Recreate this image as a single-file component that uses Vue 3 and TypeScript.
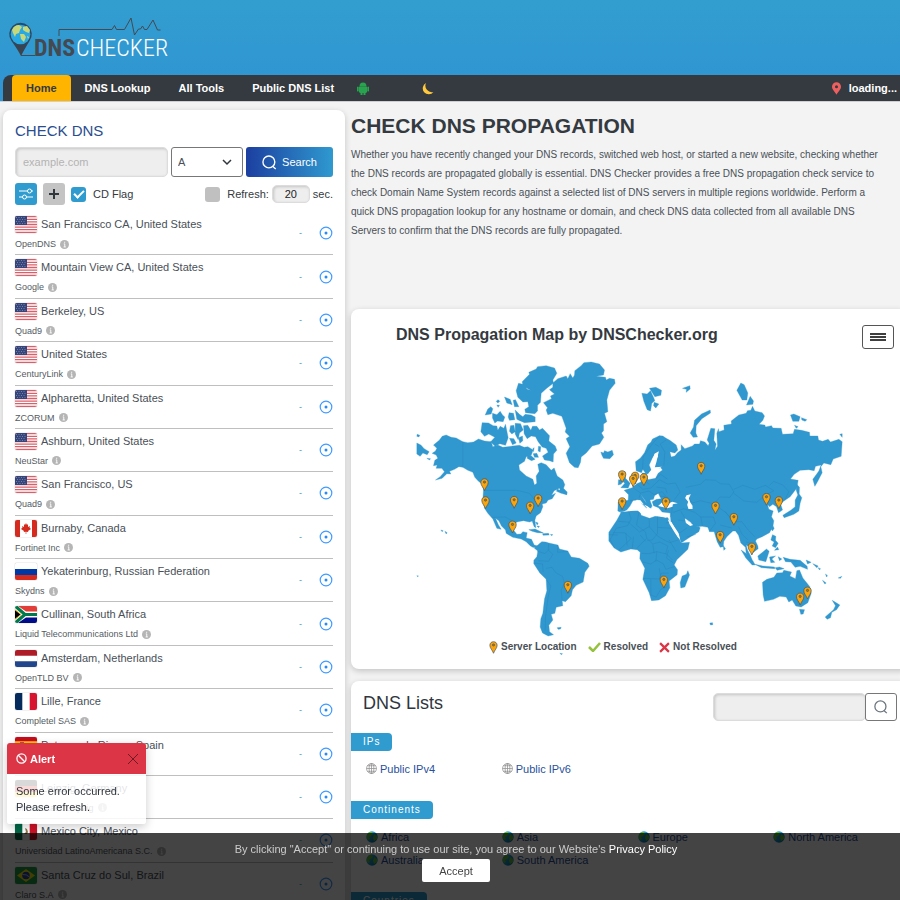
<script setup lang="ts">
import { ref } from 'vue'

interface Server { name: string; provider: string; flag: string }

const servers: Server[] = [
  { name: 'San Francisco CA, United States', provider: 'OpenDNS', flag: 'us' },
  { name: 'Mountain View CA, United States', provider: 'Google', flag: 'us' },
  { name: 'Berkeley, US', provider: 'Quad9', flag: 'us' },
  { name: 'United States', provider: 'CenturyLink', flag: 'us' },
  { name: 'Alpharetta, United States', provider: 'ZCORUM', flag: 'us' },
  { name: 'Ashburn, United States', provider: 'NeuStar', flag: 'us' },
  { name: 'San Francisco, US', provider: 'Quad9', flag: 'us' },
  { name: 'Burnaby, Canada', provider: 'Fortinet Inc', flag: 'ca' },
  { name: 'Yekaterinburg, Russian Federation', provider: 'Skydns', flag: 'ru' },
  { name: 'Cullinan, South Africa', provider: 'Liquid Telecommunications Ltd', flag: 'za' },
  { name: 'Amsterdam, Netherlands', provider: 'OpenTLD BV', flag: 'nl' },
  { name: 'Lille, France', provider: 'Completel SAS', flag: 'fr' },
  { name: 'Paterna de Rivera, Spain', provider: 'Tecnocratica', flag: 'es' },
  { name: 'Leipzig, Germany', provider: 'Universitaet Leipzig', flag: 'de' },
  { name: 'Mexico City, Mexico', provider: 'Universidad LatinoAmericana S.C.', flag: 'mx' },
  { name: 'Santa Cruz do Sul, Brazil', provider: 'Claro S.A', flag: 'br' },
]

const navLinks = ['DNS Lookup', 'All Tools', 'Public DNS List']
const ips = ['Public IPv4', 'Public IPv6']
const continents = ['Africa', 'Asia', 'Europe', 'North America', 'Australia', 'South America']

/* Marker centres in map units */
const pins: [number, number][] = [
  [225, 404], [228, 458], [314, 457], [362, 474], [386, 452], [309, 531], [475, 712],
  [638, 380], [677, 384], [671, 393], [703, 389], [638, 461], [769, 461], [875, 355],
  [918, 474], [973, 508], [1071, 448], [1108, 458], [932, 562], [1027, 597], [763, 696],
  [1194, 729], [1172, 747],
]

/* West: the Americas and Greenland */
const west: string[] = [
  'M110 255L98 259 90 270 72 285 82 295 78 303 68 310 80 315 85 325 76 331 72 347 83 345 80 355 97 355 105 365 92 380 78 390 98 385 112 371 124 372 120 364 135 358 148 350 160 352 175 361 190 367 196 382 207 394 218 402 222 420 220 450 225 475 235 490 250 507 262 535 275 538 267 525 258 505 268 512 276 528 288 540 290 550 310 562 335 567 350 575 362 587 370 592 382 594 389 589 374 585 366 568 350 564 353 548 340 545 334 552 322 553 312 540 312 521 325 515 342 512 360 516 368 513 374 530 379 533 376 511 380 498 393 488 400 470 398 462 410 459 416 450 428 446 438 430 426 436 434 422 450 415 455 424 472 434 472 425 462 415 466 404 460 390 443 378 434 354 425 361 410 344 395 338 385 343 389 364 380 378 382 400 375 405 370 388 350 378 330 360 328 345 345 334 350 320 365 316 371 300 355 290 344 292 330 286 310 288 280 292 265 285 250 290 245 275 225 273 207 267 192 276 175 278 160 275 140 264 125 262Z',
  'M22 279L34 285 44 296 59 305 53 314 40 309 32 319 22 312ZM23 253L31 256 28 261 22 259ZM52 325L63 326 60 330Z',
  'M338 95L360 73 358 67 380 57 384 50 410 47 435 54 442 70 430 90 432 99 410 116 395 130 393 157 384 166 384 183 376 191 348 188 346 178 358 170 355 155 340 156 325 142 320 122 327 100 340 103 353 118 364 121 341 109Z',
  'M285 141L302 148 308 164 292 159ZM311 151L318 149 328 170 315 170ZM266 149L271 154 265 159 260 154ZM262 165L270 166 266 172ZM244 170L250 176 245 192 227 195 235 177ZM249 190L262 194 272 184 279 195 286 201 281 215 264 213 256 219 249 204ZM299 188L312 190 316 209 300 211 296 201ZM317 180L330 193 340 200 347 193 365 195 377 201 377 215 345 218 331 212 322 208Z',
  'M218 218L237 219 251 227 262 228 265 241 272 229 283 235 288 223 296 263 288 286 271 281 257 289 243 276 256 262 238 252 225 259 214 245ZM303 227L313 226 317 245 307 252 300 244ZM317 220L333 221 341 240 330 249 326 269 317 252ZM300 265L313 266 320 279 309 284ZM327 263L339 258 340 272 331 280Z',
  'M342 227L355 226 364 241 369 229 382 229 390 240 399 235 420 257 418 273 437 288 442 301 432 312 431 336 420 332 405 330 399 318 416 307 410 295 398 291 386 275 378 260 365 258 353 266 344 251ZM370 296L374 293 372 305ZM387 289L394 290 392 306 386 303ZM354 313L365 317 377 328 366 332 353 325ZM371 311L382 310 387 322 375 322Z',
  'M495 75L496 62 515 47 523 38 545 36 570 42 585 60 582 75 560 79 588 82 590 90 600 85 615 88 617 100 600 121 592 150 595 185 585 190 592 215 582 222 582 242 576 249 583 262 570 282 548 288 530 309 515 321 513 337 506 353 495 352 480 338 470 310 481 290 470 266 480 259 467 246 470 235 457 199 430 190 415 194 410 180 414 173 402 158 426 146 423 138 435 132 420 119 430 112 430 99 445 86 470 78 475 86 482 71 490 84Z',
  'M574 306L582 309 585 302 595 306 608 301 612 314 601 326 582 325 577 315Z',
  'M375 595L391 580 397 575 409 576 418 579 445 585 450 597 475 603 485 621 510 625 535 640 539 649 526 667 521 696 500 706 489 719 485 737 468 755 458 752 460 767 440 772 436 790 425 793 430 810 418 826 420 845 432 854 416 858 399 849 392 831 394 806 400 790 405 747 412 722 410 688 391 669 373 641 373 631 382 620 385 603Z',
  'M358 539L377 537 402 549 384 548 368 544ZM399 551L417 550 419 555 401 556ZM423 553L430 554 426 557ZM378 516L386 519 383 525ZM382 528L390 529 387 533ZM94 540L101 542 98 545ZM106 544L113 548 110 552ZM22 677L27 678 24 680ZM443 833L455 832 453 837 446 838ZM451 910L459 911 456 914Z',
  'M443 417L451 421 455 411 460 421 473 427 471 434 455 430 441 424Z',
]

/* East: Europe, Africa, Asia and Oceania, drawn from an origin 570 units to the right */
const east: string[] = [
  'M108 335L123 324 135 308 145 284 154 277 159 267 180 257 190 258 200 265 211 271 230 285 235 300 226 309 211 305 215 321 226 318 234 308 245 300 245 284 256 296 279 288 285 282 300 282 303 272 316 276 326 287 329 280 323 270 334 235 346 236 343 271 350 282 346 301 354 289 352 250 357 236 358 245 374 240 373 226 396 222 395 213 418 195 440 190 444 182 454 181 459 169 466 183 488 188 495 198 490 211 479 223 496 225 498 231 516 227 520 234 545 235 549 253 581 251 585 238 606 241 630 247 631 258 655 258 657 270 669 274 686 268 693 276 718 268 728 275 725 319 701 327 694 344 673 339 664 350 668 368 654 395 646 409 640 388 651 373 658 363 665 345 648 349 644 362 628 359 602 361 584 373 573 387 596 391 592 414 572 440 552 454 543 461 549 480 537 488 531 470 520 463 510 470 504 463 508 478 521 483 516 500 523 512 520 530 510 548 488 560 472 567 468 573 475 588 476 596 460 608 451 592 440 585 444 600 453 617 458 630 450 628 440 610 438 592 424 579 417 556 408 543 400 543 382 560 373 574 371 590 362 592 353 575 344 545 330 545 325 532 308 529 288 530 270 514 258 506 261 520 270 525 280 518 302 533 298 545 272 561 246 578 235 553 214 512 212 489 188 486 177 473 162 467 158 455 171 448 185 446 176 430 165 437 162 448 151 450 158 469 150 475 136 450 122 431 139 457 156 474 143 476 116 449 101 451 91 469 81 481 66 488 55 483 56 456 86 451 87 434 74 421 98 413 112 401 124 396 128 385 128 369 141 370 145 389 168 385 176 370 189 360 184 353 166 357 160 347 176 319 170 309 159 323 149 345 155 360 145 372 137 368 130 358 126 368 110 362Z',
  'M59 365L77 365 78 385 92 400 86 414 64 413 76 400 66 391 70 380ZM57 389L68 390 66 402 56 405Z',
  'M65 487L90 484 120 478 125 496 150 505 167 499 205 503 214 521 235 560 246 579 270 577 265 598 232 629 224 645 234 659 233 674 209 693 211 713 198 737 178 750 156 752 149 728 130 688 136 655 121 626 122 607 113 599 94 597 64 606 44 594 28 573 28 547 52 511Z',
  'M265 662L270 675 256 711 244 714 242 698 248 678 261 673ZM371 586L378 596 373 601ZM331 819L339 818 340 824 333 825Z',
  'M127 130L143 132 153 122 162 142 166 152 157 160 153 183 143 179 133 154ZM150 115L169 112 186 121 184 136 166 140ZM164 157L178 162 169 174 162 167ZM249 115L271 107 272 117 260 127 261 118Z',
  'M332 180L333 189 307 206 290 227 289 249 294 261 281 262 272 249 282 231 285 211 306 192ZM424 99L434 104 445 129 442 150 428 150 412 121ZM452 139L462 153 460 163 441 165ZM573 195L583 192 602 200 598 214 580 214ZM606 203L622 209 617 214 607 210ZM585 226L596 230 590 235ZM721 253L728 251 728 262Z',
  'M591 402L600 412 599 432 607 443 602 459 598 483 583 493 554 503 550 496 575 480 587 470 587 450 595 435 590 420ZM520 527L524 535 519 543 515 537ZM519 554L529 559 528 571 536 580 528 593 518 588 524 576 514 570ZM534 591L538 599 525 601ZM425 600L441 611 460 632 467 645 458 645 439 624ZM466 643L490 648 525 651 526 656 486 653ZM475 618L490 606 501 597 509 604 499 635 478 630ZM510 621L528 618 517 627 526 637 514 638ZM536 620L547 627 540 632ZM551 622L572 628 602 631 623 649 624 658 602 649 587 652 574 636 558 635ZM527 653L540 651 554 656 533 661ZM620 630L635 637 624 642ZM640 641L656 648 652 653ZM656 653L663 656 660 660Z',
  'M489 697L502 688 523 682 532 669 549 668 553 661 576 666 571 678 588 686 592 662 600 660 610 684 631 710 635 730 625 758 605 771 589 768 578 750 568 756 560 741 541 739 522 748 495 754 491 735ZM600 778L615 779 611 792 604 793ZM698 751L708 757 721 765 711 779 697 787 693 803 683 808 677 801 702 779 708 767ZM669 691L680 699 676 702ZM678 672L684 677 681 681ZM716 684L727 679 723 685Z',
]

const seas: string[] = [
  'M176 468L188 457 200 464 218 455 235 460 220 463 219 470 203 475 189 471ZM261 436L274 433 268 445 272 457 279 467 279 477 267 477 263 464 266 455 257 444Z',
  'M165 311L178 304 171 335 166 352 187 350 167 363 159 379 146 386 148 370 158 356 155 338Z',
  'M110 452L122 450 143 475 131 478 134 493 157 495 180 498 200 503 203 496 181 496 171 478 161 481 144 469ZM59 486L119 475 131 486 128 493 115 482 89 482Z',
  'M205 508L210 522 225 547 235 562 242 568 237 549 215 516ZM256 505L259 518 272 528 281 525 264 512Z',
]

const bordersWest = 'M160 275V352M222 421H322L360 430 374 448 398 443M248 502L287 501 311 514M418 580L416 600 430 613 417 634 386 632M445 585L444 607 475 604M383 603L406 611 419 598M410 655L427 652 440 669 459 679 465 700 455 720 458 752M410 688L424 708 416 741 408 800 407 842M373 639L399 642 401 666'
const bordersEast = 'M180 257L155 286 131 321 129 359M200 270L182 282 196 306 193 347M166 282L180 290M101 414L123 429 148 423 164 434 188 425 198 438M112 402L130 418 154 414 180 389 204 402 228 399 242 426 225 448M135 388L149 404M168 386L184 373 203 387M171 411L198 415 203 430M180 438L204 441M259 412L303 403 317 389 348 391 362 401 390 403 403 426 391 442 361 441 344 462 303 452 278 459 263 437M403 418L430 406 466 418 497 406 523 422 495 437 472 457 433 453 403 430M510 406L522 394 550 405 568 425 555 451M343 462L377 486 403 515 427 515 446 540 466 560M221 487L253 476 286 487 304 501 342 501 348 520 330 544M219 463L217 487 213 501M257 505L244 484M304 501L309 528M362 525L397 534M417 530L427 552 445 570M440 576L461 582M56 514L86 516 120 546 149 530 174 558 196 571 211 578 235 570M88 485L95 507 84 527 50 535 32 569 45 593M119 483L111 525 138 546 142 565 121 585 110 598M149 505L150 532M174 500L174 551 158 570 143 571M174 532L220 535M142 565L160 582 181 576 205 588 199 610 219 630M126 610L148 611 172 605 201 612M130 636L154 642 171 630 192 642 199 658 224 650M132 685L179 687 185 670 207 669M154 687V735L170 741 184 718 203 710M40 548L75 548 95 565 77 583 58 600M160 583L164 610M209 570L231 606'
const africanLines = 'M28 554L55 555M79 549L83 587M102 560L98 597M122 555L138 574M172 605L169 635M179 655L185 688 200 700M207 600L201 624 220 638M219 513L200 519M235 510L269 514M263 533L242 548 224 545M289 553L262 561M572 631L591 634M390 500L374 482M91 452L110 450M123 430L119 443'

const recordType = ref('A')
const cdFlag = ref(true)
const autoRefresh = ref(false)
const alertOpen = ref(true)
const consentOpen = ref(true)
</script>

<template>
  <div class="site">
    <svg class="defs" aria-hidden="true">
      <defs>
        <linearGradient id="globe" x1="0" y1="0" x2="1" y2="1"><stop offset="0" stop-color="#2db4ef" /><stop offset="1" stop-color="#0873a8" /></linearGradient>
        <linearGradient id="pinBody" x1="0" y1="0" x2="0" y2="1"><stop offset="0" stop-color="#244b70" /><stop offset="1" stop-color="#3d4249" /></linearGradient>
      </defs>
      <symbol id="pin" viewBox="0 0 24 36"><path d="M12 2C6 2 2 6 2 12c0 8 7 13 10 22 3-9 10-14 10-22 0-6-4-10-10-10Z" fill="#fca50b" stroke="#4d5860" stroke-width="2" /><circle cx="12" cy="11" r="3" fill="#9c7b2b" stroke="#4d5860" stroke-width="2" /></symbol>
      <symbol id="search" viewBox="0 0 24 24"><circle cx="11" cy="11" r="9.500" fill="none" stroke="currentColor" stroke-width="2.200" /><path d="M17 18l5 4.500" fill="none" stroke="currentColor" stroke-width="2.200" /></symbol>
      <symbol id="flag-us" viewBox="0 0 22 17"><path fill="#fff" d="M0 0h22v17H0z" /><path stroke="#d9606a" stroke-width="1.3" d="M0 .7h22M0 3.3h22M0 5.9h22M0 8.5h22M0 11.1h22M0 13.7h22M0 16.3h22" /><path fill="#35457c" d="M0 0h12v9H0z" /><path stroke="#8490b4" stroke-width=".8" stroke-dasharray="1 1.5" d="M1 1.5h10M2 3.5h9M1 5.5h10M2 7.5h9" /></symbol>
      <symbol id="flag-ca" viewBox="0 0 22 17"><path fill="#fff" d="M0 0h22v17H0z" /><path fill="#d52b1e" d="M0 0h5v17H0zM17 0h5v17h-5zM11 3l1 2 1-1v3l2-1-.5 1.500L16 9l-3 2 .3 1-2-.3V14h-.6v-2.300l-2 .3.3-1-3-2 1.500-1.500L7 6l2 1V4l1 1z" /></symbol>
      <symbol id="flag-ru" viewBox="0 0 22 17"><path fill="#fff" d="M0 0h22v6H0z" /><path fill="#0039a6" d="M0 6h22v6H0z" /><path fill="#d52b1e" d="M0 12h22v5H0z" /></symbol>
      <symbol id="flag-za" viewBox="0 0 22 17"><path fill="#fff" d="M0 0h22v17H0z" /><path fill="#e23d36" d="M3 0h19v5.500H11z" /><path fill="#000c8a" d="M3 17h19v-5.500H11z" /><path fill="none" stroke="#007a4d" stroke-width="3.200" d="M-1-1l11 9.500L-1 18M9 8.500h13" /><path fill="#000" stroke="#ffb612" stroke-width="1" d="M-1 3l7 5.500L-1 14z" /></symbol>
      <symbol id="flag-nl" viewBox="0 0 22 17"><path fill="#fff" d="M0 0h22v17H0z" /><path fill="#ae1c28" d="M0 0h22v5.700H0z" /><path fill="#21468b" d="M0 11.300h22V17H0z" /></symbol>
      <symbol id="flag-fr" viewBox="0 0 22 17"><path fill="#fff" d="M0 0h22v17H0z" /><path fill="#052a5c" d="M0 0h7.300v17H0z" /><path fill="#d81530" d="M14.700 0H22v17h-7.300z" /></symbol>
      <symbol id="flag-es" viewBox="0 0 22 17"><path fill="#c60b1e" d="M0 0h22v17H0z" /><path fill="#ffc400" d="M0 4.200h22v8.600H0z" /><path fill="#b05a20" d="M5 5h4v5H5z" /></symbol>
      <symbol id="flag-de" viewBox="0 0 22 17"><path d="M0 0h22v6H0z" /><path fill="#d00" d="M0 6h22v6H0z" /><path fill="#ffce00" d="M0 12h22v5H0z" /></symbol>
      <symbol id="flag-mx" viewBox="0 0 22 17"><path fill="#fff" d="M0 0h22v17H0z" /><path fill="#006847" d="M0 0h7.300v17H0z" /><path fill="#ce1126" d="M14.700 0H22v17h-7.300z" /><path fill="#8c7748" d="M10 5l2 1 1 3-1 2H9l2-2z" /></symbol>
      <symbol id="flag-br" viewBox="0 0 22 17"><path fill="#229e45" d="M0 0h22v17H0z" /><path fill="#f8e509" d="M11 2l9 6.500L11 15 2 8.500z" /><circle cx="11" cy="8.500" r="3.800" fill="#2b49a3" /><path fill="none" stroke="#fff" stroke-width=".6" d="M7.500 7.500q4-.5 7 2.500" /></symbol>
    </svg>

    <header class="site-header">
      <a class="logo" href="#" aria-label="DNS Checker">
        <svg viewBox="0 0 160 42" width="160" height="42">
          <path d="M12 38Q9 32 2.500 23A11.300 11.300 0 1 1 20.500 23Q15 32 12 38Z" fill="url(#pinBody)" />
          <path d="M12 37.500h14M50 18v-6.500h53l2.500-4 2 4h8L122 0l3.500 17 4-6h2l2-3 2 3.500h2.500L144 2l4.500 10h3" fill="none" stroke="#444a52" stroke-width="1" />
          <circle cx="11.500" cy="16.500" r="9.800" fill="#28a9e4" />
          <path d="M3 12q2-5 7-5l3 2-2 3-1 3-3 1-1 3-2-4ZM14 9l4-1 3 4-1 3-3-1-3-2ZM11 16h4l2 3-2 5-3-3ZM18 18l2 1-1 2Z" fill="#c8d879" />
          <text x="25" y="38" class="logo-dns">DNS</text>
          <text x="67" y="38" class="logo-checker">CHECKER</text>
        </svg>
      </a>
      <nav class="nav">
        <a class="nav-link active" href="#">Home</a>
        <a v-for="link in navLinks" :key="link" class="nav-link" href="#">{{ link }}</a>
        <a class="nav-icon android" href="#" aria-label="Android app">
          <svg viewBox="0 0 12 13" width="12" height="13" fill="#27a44d"><path d="M2.500 4.500a3.500 4 0 0 1 7 0zM2 4.800h8V10l-1 1H3l-1-1zM0 5q1-1 1.700 0v4Q.8 10 0 9zM10.300 5q1-1 1.700 0v4q-.8 1-1.700 0zM3.500 10h2v3h-2zM6.500 10h2v3h-2z" /></svg>
        </a>
        <button class="nav-icon" type="button" aria-label="Dark mode">
          <svg viewBox="0 0 12 13" width="12" height="13"><path d="M4 1a6 6 0 1 0 7.500 9A6.500 6.500 0 0 1 4 1Z" fill="#ffc83d" /></svg>
        </button>
        <span class="location">
          <svg viewBox="0 0 10 14" width="9" height="13"><path fill-rule="evenodd" d="M5 0a5 5 0 0 0-5 5c0 3 3 5 5 9 2-4 5-6 5-9a5 5 0 0 0-5-5Zm0 3.300a1.700 1.700 0 1 1 0 3.400 1.700 1.700 0 0 1 0-3.400Z" fill="#ee6060" /></svg>
          loading...
        </span>
      </nav>
    </header>

    <div class="columns">
      <section class="card checker">
        <h2>CHECK DNS</h2>
        <form class="query" @submit.prevent>
          <input class="field domain" type="text" placeholder="example.com" aria-label="Domain name" />
          <span class="select-wrap">
            <select v-model="recordType" aria-label="Record type"><option>A</option><option>AAAA</option><option>MX</option></select>
            <svg viewBox="0 0 10 10" width="10" height="10"><path d="M1 3l4 4 4-4" fill="none" stroke="#30363d" stroke-width="1.500" /></svg>
          </span>
          <button class="go" type="submit"><svg width="15" height="15"><use href="#search" /></svg>Search</button>
        </form>
        <div class="options">
          <button class="tool blue" type="button" aria-label="Filter">
            <svg viewBox="0 0 14 12" width="14" height="12" fill="none" stroke="#fff"><path d="M0 3h8.500M12.500 3H14M0 9h3.500M7.500 9H14" /><circle cx="10.500" cy="3" r="2" /><circle cx="5.500" cy="9" r="2" /></svg>
          </button>
          <button class="tool" type="button" aria-label="Add server">
            <svg viewBox="0 0 10 10" width="10" height="10"><path d="M5 0v10M0 5h10" stroke="#30363d" stroke-width="2" /></svg>
          </button>
          <label class="check"><input v-model="cdFlag" type="checkbox" /><span>CD Flag</span></label>
          <label class="check refresh"><input v-model="autoRefresh" type="checkbox" /><span>Refresh:</span></label>
          <label class="seconds"><input class="field" type="text" value="20" aria-label="Refresh seconds" />sec.</label>
        </div>
        <ul class="servers">
          <li v-for="(server, index) in servers" :key="index">
            <div class="server">
              <div class="place"><svg class="flag" width="22" height="17"><use :href="'#flag-' + server.flag" /></svg>{{ server.name }}</div>
              <div class="provider">{{ server.provider }}
                <svg viewBox="0 0 10 10" width="9" height="9"><circle cx="5" cy="5" r="5" fill="#b5b5b5" /><path d="M4.200 4.300H5.300V7.700M4 7.700h2.500M5.200 1.900v1.300" stroke="#fff" fill="none" /></svg>
              </div>
            </div>
            <span class="result">-</span>
            <svg class="target" viewBox="0 0 14 14" width="14" height="14"><circle cx="7" cy="7" r="5.800" fill="none" stroke="#409bff" stroke-width="1.200" /><circle cx="7" cy="7" r="1.500" fill="#258cf5" /></svg>
          </li>
        </ul>
      </section>

      <main class="content">
        <section class="intro">
          <h1>CHECK DNS PROPAGATION</h1>
          <p>Whether you have recently changed your DNS records, switched web host, or started a new website, checking whether the DNS records are propagated globally is essential. DNS Checker provides a free DNS propagation check service to check Domain Name System records against a selected list of DNS servers in multiple regions worldwide. Perform a quick DNS propagation lookup for any hostname or domain, and check DNS data collected from all available DNS Servers to confirm that the DNS records are fully propagated.</p>
        </section>

        <section class="card map-card">
          <div class="map-head">
            <h2>DNS Propagation Map by DNSChecker.org</h2>
            <button type="button" aria-label="Map menu"><svg viewBox="0 0 16 8" width="16" height="8"><path d="M0 1h16M0 4h16M0 7h16" stroke="#000" stroke-width="1.600" /></svg></button>
          </div>
          <svg class="map" viewBox="20 30 1280 900" width="427" height="300">
            <g class="land"><path v-for="d in west" :key="d" :d="d" /></g>
            <path class="border" :d="bordersWest" />
            <g transform="translate(570 0)">
              <g class="land"><path v-for="d in east" :key="d" :d="d" /></g>
              <path class="border" :d="bordersEast" /><path class="border" :d="africanLines" />
              <g fill="#fff"><path v-for="d in seas" :key="d" :d="d" /></g>
            </g>
            <use v-for="(p, i) in pins" :key="i" href="#pin" :x="p[0] - 14" :y="p[1] - 20" width="28" height="40" />
          </svg>
          <ul class="legend">
            <li><svg width="9" height="13"><use href="#pin" /></svg>Server Location</li>
            <li><svg viewBox="0 0 13 10" width="13" height="10"><path d="M1 5l4 4 7-8" fill="none" stroke="#95c13d" stroke-width="2.500" /></svg>Resolved</li>
            <li><svg viewBox="0 0 10 10" width="11" height="11"><path d="M1 1l8 8M9 1L1 9" stroke="#dc3545" stroke-width="2" /></svg>Not Resolved</li>
          </ul>
        </section>

        <section class="card lists">
          <div class="lists-head">
            <h2>DNS Lists</h2>
            <form class="list-search" @submit.prevent>
              <input class="field" type="text" aria-label="Search DNS lists" />
              <button type="submit" aria-label="Search"><svg width="14" height="14"><use href="#search" /></svg></button>
            </form>
          </div>
          <h3 class="tag">IPs</h3>
          <ul class="links">
            <li v-for="ip in ips" :key="ip">
              <a href="#"><svg viewBox="0 0 12 12" width="11" height="11" fill="none" stroke="#8d8d8d" stroke-width=".8"><circle cx="6" cy="6" r="5.400" /><ellipse cx="6" cy="6" rx="2.600" ry="5.400" /><path d="M6 .5v11M.5 6h11M1.500 3h9M1.500 9h9" /></svg>{{ ip }}</a>
            </li>
          </ul>
          <h3 class="tag">Continents</h3>
          <ul class="links">
            <li v-for="place in continents" :key="place">
              <a href="#"><svg viewBox="0 0 12 12" width="12" height="12"><circle cx="6" cy="6" r="5.700" fill="url(#globe)" /><path d="M1 4q2-4 5-3l1 2-2 2-2 1 1 2-2 1Q0 7 1 4ZM8 3l3 2v3l-3 2-1-3Z" fill="#63bb37" /></svg>{{ place }}</a>
            </li>
          </ul>
          <h3 class="tag">Countries</h3>
        </section>
      </main>
    </div>

    <aside v-if="alertOpen" class="alert" role="alert">
      <div class="alert-head">
        <svg viewBox="0 0 12 12" width="11" height="11" fill="none" stroke="#fff" stroke-width="1.400"><circle cx="6" cy="6" r="5" /><path d="M2.500 2.500l7 7" /></svg>
        <strong>Alert</strong>
        <button type="button" aria-label="Close" @click="alertOpen = false"><svg viewBox="0 0 12 12" width="12" height="12"><path d="M1 1l10 10M11 1L1 11" stroke="#701b23" /></svg></button>
      </div>
      <div class="alert-body">Some error occurred.<br />Please refresh.</div>
    </aside>

    <div v-if="consentOpen" class="consent">
      <p>By clicking "Accept" or continuing to use our site, you agree to our Website's <a href="#">Privacy Policy</a></p>
      <button type="button" @click="consentOpen = false">Accept</button>
    </div>
  </div>
</template>

<style>
body { background: #f3f3f3; }
</style>

<style scoped>
.site, .site * { box-sizing: border-box; }
.site { height: 100vh; overflow: hidden; color: #495057; background: #f3f3f3; font-family: "Liberation Sans", Arial, sans-serif; font-size: 11px; line-height: 16px; }
.defs { position: absolute; width: 0; height: 0; }
h1, h2, h3, p, ul { margin: 0; padding: 0; font-weight: normal; }
ul { list-style: none; }
svg { display: block; flex: none; }
a { text-decoration: none; color: inherit; }
button, input, select { font: inherit; color: inherit; margin: 0; padding: 0; }
button { border: 0; background: none; display: flex; align-items: center; justify-content: center; cursor: pointer; }

.site-header { background: linear-gradient(#329ecf, #3093d3); border-bottom: 1px solid #cfcfcf; padding-left: 3px; }
.logo { display: block; height: 75px; padding: 18px 0 0 6px; }
.logo svg { overflow: visible; }
.logo text { font-family: "Liberation Sans Narrow", "Roboto Condensed", "Liberation Sans", sans-serif; font-size: 24px; }
.logo .logo-dns { font-weight: bold; fill: #444a52; }
.logo .logo-checker { font-weight: 300; fill: #fff; }
.nav { display: flex; align-items: stretch; height: 26px; padding: 0 3px 0 9px; background: #343a40; border-radius: 8px 0 0 0; color: #fff; font-weight: bold; }
.nav-link { padding: 5px 14px; }
.nav-link.active { background: #ffb400; color: #343a40; border-radius: 4px 4px 0 0; }
.nav-icon { display: flex; align-items: center; margin-left: 53px; }
.nav-icon.android { margin-left: 9px; }
.location { display: flex; align-items: center; gap: 8px; margin-left: auto; }

.columns { display: flex; align-items: flex-start; gap: 6px; margin: 8px -9px 0 3px; }
.card { background: #fff; border-radius: 8px; box-shadow: 0 2px 6px rgba(0, 0, 0, .2); }
.checker { flex: none; width: 342px; padding: 9px 12px; }
.checker h2 { font-size: 15px; line-height: 24px; color: #2a4d8f; }
.field { border: 1px solid #dcdcdc; border-radius: 5px; background: #eee; box-shadow: inset 1px 1px 3px rgba(0, 0, 0, .18); outline: 0; min-width: 0; }
.query { display: flex; gap: 3px; margin-top: 4px; height: 30px; }
.domain { flex: 1; padding: 0 7px; }
.domain::placeholder { color: #b3b3b3; opacity: 1; }
.select-wrap { position: relative; width: 72px; }
.select-wrap select { width: 100%; height: 100%; appearance: none; border: 1px solid #777; border-radius: 3px; background: #fff; padding-left: 6px; }
.select-wrap svg { position: absolute; right: 11px; top: 10px; }
.go { width: 87px; gap: 5px; border-radius: 3px; color: #fff; background: linear-gradient(90deg, #1c3fa0, #2f99cf); }
.options { display: flex; align-items: center; height: 22px; margin-top: 6px; }
.tool { width: 22px; height: 22px; border-radius: 3px; background: #c4c4c4; margin-right: 6px; }
.tool.blue { background: #2f9bcf; }
.check { display: flex; align-items: center; gap: 7px; color: #343a40; }
.check input { appearance: none; width: 15px; height: 15px; border-radius: 3px; background: #c0c0c0; display: grid; place-items: center; }
.check input:checked { background: #2f9bcf; }
.check input:checked::before { content: ""; width: 8px; height: 4px; border: solid #fff; border-width: 0 0 2px 2px; transform: translateY(-1px) rotate(-45deg); }
.refresh { margin-left: auto; margin-right: 3px; }
.seconds { display: flex; align-items: center; gap: 3px; color: #343a40; }
.seconds input { width: 38px; height: 18px; text-align: center; color: #222; }
.servers { display: grid; grid-auto-rows: 1fr; min-height: 694px; margin-top: 7px; }
.servers li { display: flex; align-items: center; border-bottom: 1px solid #bfbfbf; }
.server { flex: 1; align-self: start; padding-top: 4px; }
.place { display: flex; align-items: flex-start; gap: 4px; height: 20px; }
.flag { border-radius: 2px; box-shadow: 0 0 1px #777; }
.provider { display: flex; align-items: center; gap: 4px; font-size: 9px; line-height: 14px; margin-top: 1px; color: #555b62; }
.result { color: #409bc8; font-size: 9px; margin-right: 17px; }

.content { flex: 1; min-width: 0; display: grid; gap: 12px; }
.intro { height: 187px; }
.intro h1 { font-size: 21px; line-height: 32px; font-weight: bold; color: #343a40; white-space: nowrap; }
.intro p { max-width: 540px; font-size: 10px; line-height: 19px; margin-top: 3px; }
.map-card { height: 360px; padding: 16px 15px 0 45px; }
.map-head { display: flex; justify-content: space-between; }
.map-head h2 { font-size: 16px; line-height: 20px; font-weight: bold; color: #343a40; }
.map-head button { width: 32px; height: 24px; border: 1px solid #555; border-radius: 3px; }
.map { display: block; margin: 11px 0 0 20px; }
.land { fill: #3098cf; stroke: #3098cf; stroke-width: 1; stroke-linejoin: round; }
.border { fill: none; stroke: #2585ba; stroke-width: 2; stroke-linejoin: round; opacity: .65; }
.legend { position: relative; display: flex; gap: 11px; margin: -21px 0 0 93px; font-size: 10px; font-weight: bold; }
.legend li { display: flex; align-items: center; gap: 3px; white-space: nowrap; }

.lists { min-height: 240px; }
.lists-head { display: flex; align-items: flex-start; justify-content: space-between; padding: 12px 12px 0; }
.lists h2 { font-size: 18px; line-height: 20px; color: #30363d; }
.list-search { display: flex; height: 28px; }
.list-search input { width: 153px; }
.list-search button { width: 32px; margin-left: -1px; background: #fff; border: 1px solid #777; border-radius: 3px; color: #6c757d; }
.tag { display: table; margin-top: 12px; padding: 0 12px; font-size: 10px; line-height: 18px; letter-spacing: 1px; color: #fff; background: #2f9bcf; border-radius: 0 4px 4px 0; }
.links { display: grid; grid-template-columns: repeat(4, 1fr); padding: 6px 0 9px 15px; color: #28509b; }
.links a { display: flex; align-items: center; gap: 3px; height: 23px; }

.alert { position: fixed; left: 7px; bottom: 76px; width: 139px; border-radius: 3px; overflow: hidden; box-shadow: 0 3px 10px rgba(0, 0, 0, .2); background: rgba(255, 255, 255, .85); color: #30363d; }
.alert-head { display: flex; align-items: center; gap: 3px; height: 31px; padding: 0 7px 0 9px; background: #dc3545; color: #fff; }
.alert-head button { margin-left: auto; }
.alert-body { padding: 9px; }
.consent { position: fixed; inset: auto 0 0; height: 67px; padding: 8px 0 0 12px; background: rgba(0, 0, 0, .735); color: #ccc; text-align: center; }
.consent a { color: #fff; }
.consent button { height: 23px; margin: 2px auto 0; padding: 0 17px; background: #fff; border-radius: 2px; color: #444; }
</style>
